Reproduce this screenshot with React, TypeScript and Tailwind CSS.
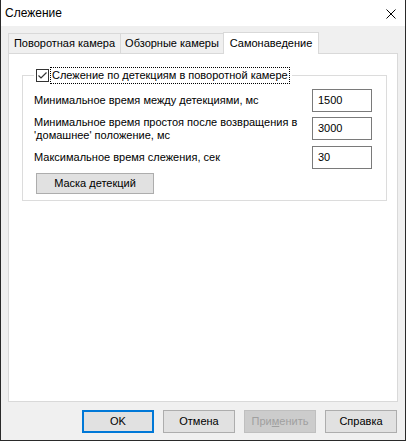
import React from 'react';

const font = { fontFamily: '"Liberation Sans", Arial, sans-serif' };

function Tab({ label, active, className }: { label: string; active?: boolean; className: string }) {
  return (
    <div
      className={
        'flex items-center justify-center whitespace-nowrap border-[#d9d9d9] ' +
        (active
          ? 'relative z-10 h-[22px] -mb-px bg-white border-l border-t border-r '
          : 'h-[20px] bg-[#f0f0f0] border-t border-r ') +
        className
      }
    >
      <span className="pb-px">{label}</span>
    </div>
  );
}

function Field({ value }: { value: string }) {
  return (
    <div className="w-[60px] h-[23px] shrink-0 border border-[#7a7a7a] bg-white pl-[5px] flex items-center">
      {value}
    </div>
  );
}

function DialogButton({
  children,
  primary,
  disabled,
}: {
  children: React.ReactNode;
  primary?: boolean;
  disabled?: boolean;
}) {
  return (
    <button
      className={
        'w-[72px] h-[23px] flex items-center justify-center ' +
        (primary
          ? 'border-2 border-[#0078d7] bg-[#e1e1e1] text-black'
          : disabled
            ? 'border border-[#bfbfbf] bg-[#cccccc] text-[#a0a0a0]'
            : 'border border-[#adadad] bg-[#e1e1e1] text-black')
      }
    >
      <span>{children}</span>
    </button>
  );
}

export default function App() {
  return (
    <div className="w-[406px] h-[441px] flex flex-col text-[11px] text-black bg-[#f0f0f0] border-x border-b border-[#2a2a2a]" style={font}>
      {/* title bar */}
      <div className="h-[26px] bg-white flex items-center justify-between pl-[4px] pr-[9px] shrink-0 text-[12px]">
        <span>Слежение</span>
        <svg width="10" height="10" viewBox="0 0 10 10" className="mt-[1px]">
          <path d="M0.5 0.5 L9.5 9.5 M9.5 0.5 L0.5 9.5" stroke="#000" strokeWidth="1" />
        </svg>
      </div>

      <div className="flex-1 flex flex-col pt-[6px] px-[7px]">
        {/* tabs */}
        <div className="flex items-end h-[21px]">
          <Tab label="Поворотная камера" className="w-[113px] border-l" />
          <Tab label="Обзорные камеры" className="w-[103px]" />
          <Tab label="Самонаведение" active className="w-[96px] -ml-px" />
        </div>

        {/* tab page */}
        <div className="h-[349px] bg-white border border-[#d9d9d9] pt-[13px] pl-[13px] pr-[10px]">
          <fieldset className="border border-[#dcdcdc] pl-[11px] pr-[14px] pb-[6px] whitespace-nowrap">
            <legend className="px-[2px] flex items-center">
              <span className="w-[13px] h-[13px] border border-[#333] bg-white flex items-center justify-center">
                <svg width="11" height="11" viewBox="0 0 11 11">
                  <path d="M1.5 5.5 L4 8 L9.5 2.5" fill="none" stroke="#333" strokeWidth="1.2" />
                </svg>
              </span>
              <span className="ml-px h-[17px] px-px flex items-center border border-dotted border-black">
                Слежение по детекциям в поворотной камере
              </span>
            </legend>

            <div className="flex items-center justify-between h-[23px] mt-[5px]">
              <span>Минимальное время между детекциями, мс</span>
              <Field value="1500" />
            </div>
            <div className="flex items-center justify-between h-[23px] mt-[5px]">
              <span className="leading-[13px]">
                Минимальное время простоя после возвращения в
                <br />
                'домашнее' положение, мс
              </span>
              <Field value="3000" />
            </div>
            <div className="flex items-center justify-between h-[23px] mt-[6px]">
              <span>Максимальное время слежения, сек</span>
              <Field value="30" />
            </div>
            <button className="mt-[4px] ml-[2px] w-[118px] h-[21px] border border-[#adadad] bg-[#e1e1e1] flex items-center justify-center">
              Маска детекций
            </button>
          </fieldset>
        </div>

        {/* dialog buttons */}
        <div className="flex justify-end gap-[9px] mt-[8px] pr-px">
          <DialogButton primary>OK</DialogButton>
          <DialogButton>Отмена</DialogButton>
          <DialogButton disabled>
            При<u>м</u>енить
          </DialogButton>
          <DialogButton>Справка</DialogButton>
        </div>
      </div>
    </div>
  );
}
